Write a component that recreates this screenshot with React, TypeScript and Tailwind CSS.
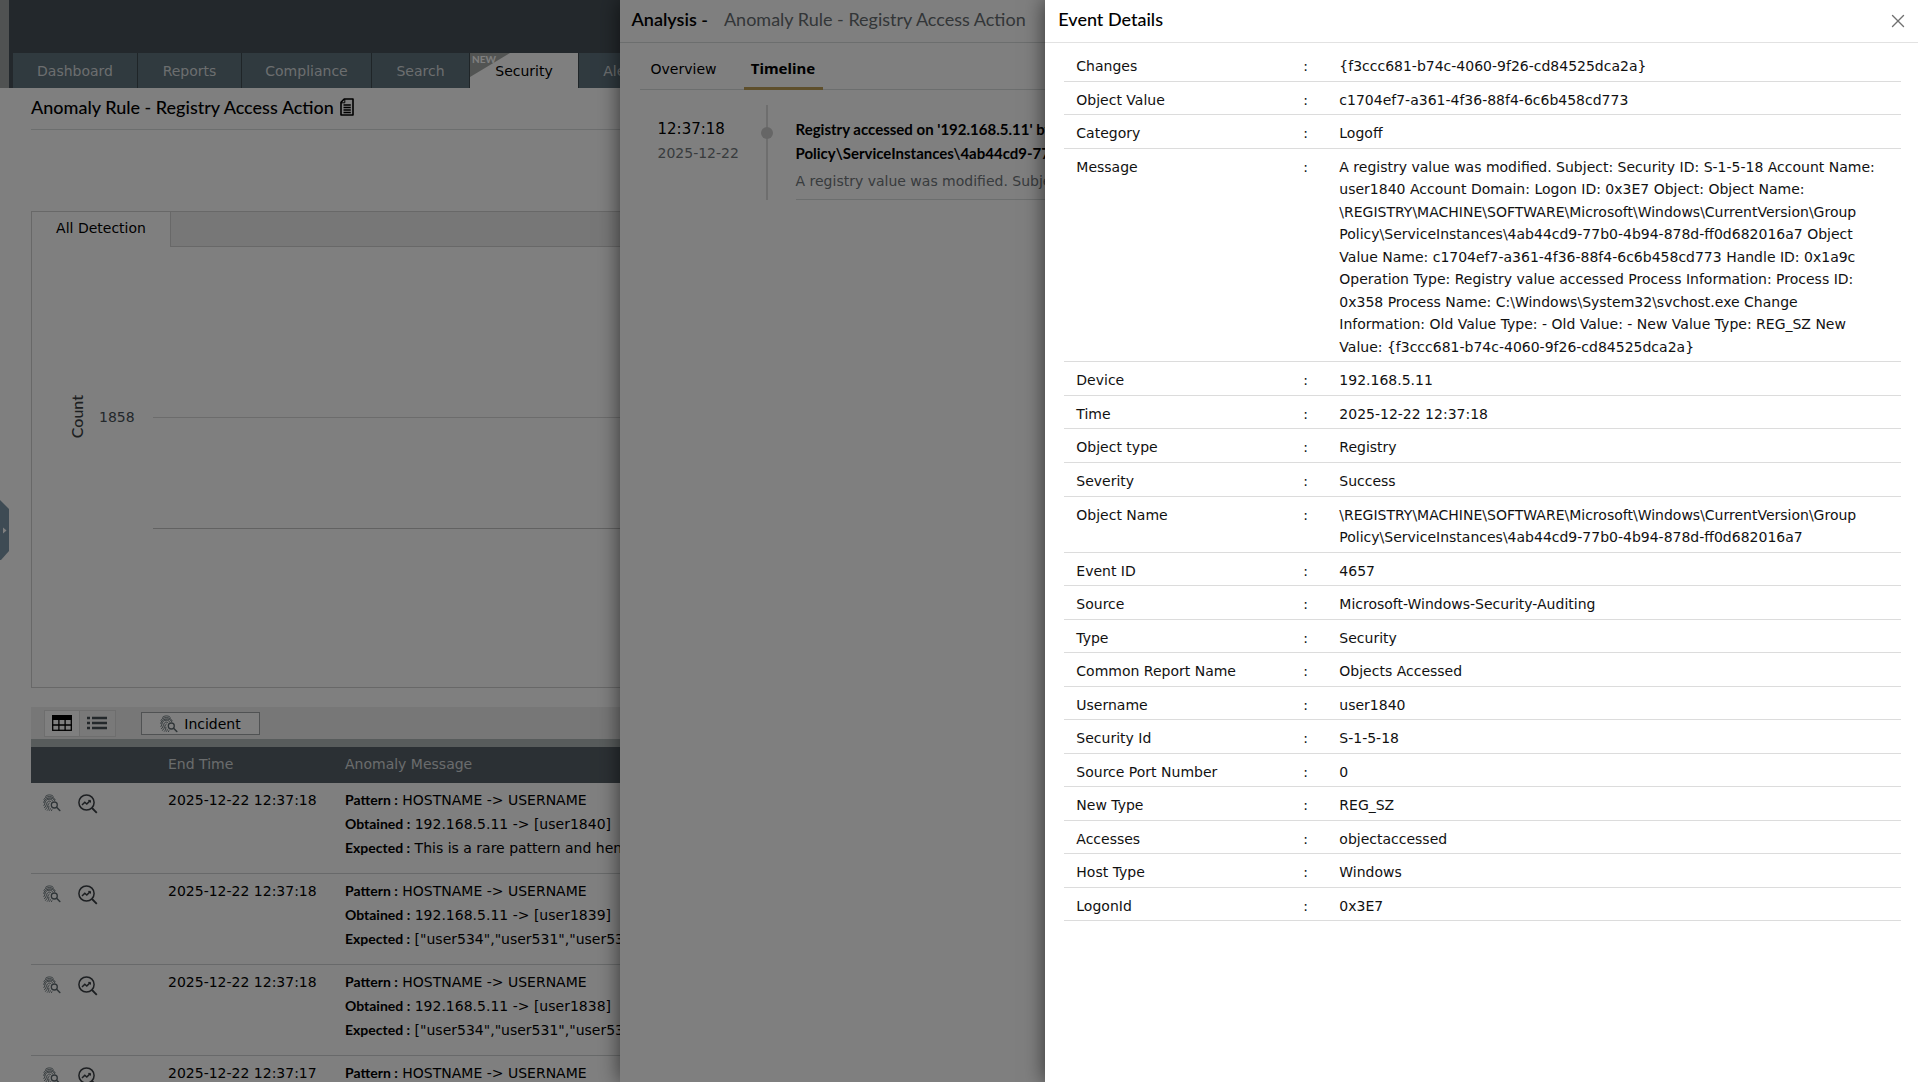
import React from 'react';
import { X } from 'lucide-react';

const tabs = [
  { label: 'Dashboard', width: 'w-[125px]' },
  { label: 'Reports', width: 'w-[104px]' },
  { label: 'Compliance', width: 'w-[130px]' },
  { label: 'Search', width: 'w-[98px]' },
  { label: 'Security', width: 'w-[109px]', active: true },
  { label: 'Alerts', width: 'w-[90px]' },
];

const anomalies = [
  { time: '2025-12-22 12:37:18', obtained: '[user1840]', expected: 'This is a rare pattern and hence' },
  { time: '2025-12-22 12:37:18', obtained: '[user1839]', expected: '["user534","user531","user532"]' },
  { time: '2025-12-22 12:37:18', obtained: '[user1838]', expected: '["user534","user531","user532"]' },
  { time: '2025-12-22 12:37:17', obtained: '[user1837]', expected: '["user534","user531","user532"]' },
];

const eventDetails = [
  ['Changes', '{f3ccc681-b74c-4060-9f26-cd84525dca2a}'],
  ['Object Value', 'c1704ef7-a361-4f36-88f4-6c6b458cd773'],
  ['Category', 'Logoff'],
  [
    'Message',
    'A registry value was modified. Subject: Security ID: S-1-5-18 Account Name: user1840 Account Domain: Logon ID: 0x3E7 Object: Object Name: \\REGISTRY\\MACHINE\\SOFTWARE\\Microsoft\\Windows\\CurrentVersion\\Group Policy\\ServiceInstances\\4ab44cd9-77b0-4b94-878d-ff0d682016a7 Object Value Name: c1704ef7-a361-4f36-88f4-6c6b458cd773 Handle ID: 0x1a9c Operation Type: Registry value accessed Process Information: Process ID: 0x358 Process Name: C:\\Windows\\System32\\svchost.exe Change Information: Old Value Type: - Old Value: - New Value Type: REG_SZ New Value: {f3ccc681-b74c-4060-9f26-cd84525dca2a}',
  ],
  ['Device', '192.168.5.11'],
  ['Time', '2025-12-22 12:37:18'],
  ['Object type', 'Registry'],
  ['Severity', 'Success'],
  [
    'Object Name',
    '\\REGISTRY\\MACHINE\\SOFTWARE\\Microsoft\\Windows\\CurrentVersion\\Group Policy\\ServiceInstances\\4ab44cd9-77b0-4b94-878d-ff0d682016a7',
  ],
  ['Event ID', '4657'],
  ['Source', 'Microsoft-Windows-Security-Auditing'],
  ['Type', 'Security'],
  ['Common Report Name', 'Objects Accessed'],
  ['Username', 'user1840'],
  ['Security Id', 'S-1-5-18'],
  ['Source Port Number', '0'],
  ['New Type', 'REG_SZ'],
  ['Accesses', 'objectaccessed'],
  ['Host Type', 'Windows'],
  ['LogonId', '0x3E7'],
];

const FingerprintSearchIcon = () => (
  <svg width="18" height="18" viewBox="0 0 18 18" fill="none" stroke="#5f6b70" strokeWidth="0.9" strokeLinecap="round">
    <path d="M2.600 2.200C4.500 0.400 8.500 0.400 10.200 2.200" />
    <path d="M0.900 5.400C2.200 1.600 10.600 1.400 12.200 5.800" />
    <path d="M0.800 8.600C0.600 3.200 10.600 2.400 11.600 6.600" />
    <path d="M0.900 11.600C2.600 9.600 1.400 5.400 6.200 5.200C8.200 5.200 9.200 6 9.600 6.800" />
    <path d="M1.400 13.800C4.200 11.600 3 7.200 6.400 7.100C7.200 7.100 7.600 7.400 7.900 7.800" />
    <path d="M2.600 15.400C5.200 13.200 4.400 9.400 6.300 9M4.400 16.300C5.800 15 5.800 13.600 5.900 12.200M6.400 16.500C7 15.900 7.200 15.300 7.300 14.600M8.500 16.600L8.900 15.700" />
    <circle cx="11.300" cy="11" r="3" strokeWidth="1.300" />
    <path d="M13.600 13.300L16.800 16.500" strokeWidth="1.600" />
  </svg>
);

const AnalyzeIcon = () => (
  <svg width="20" height="20" viewBox="0 0 20 20" fill="none" stroke="#3a3f44" strokeWidth="1.500">
    <circle cx="8.500" cy="8.500" r="7.600" />
    <path d="M14 14L18.800 18.800" strokeWidth="1.800" />
    <path d="M4 11L6.800 8.200L8.800 10L12.200 6.600" strokeWidth="1.500" />
    <path d="M10.200 6.400H12.500V8.600" strokeWidth="1" />
  </svg>
);

const GridIcon = () => (
  <svg width="20" height="16" viewBox="0 0 20 16" fill="none" stroke="#000" strokeWidth="1.300">
    <rect x="0.700" y="0.700" width="18.600" height="14.600" />
    <path d="M0 2.500H20" strokeWidth="5" />
    <path d="M0 10H20M6.900 4V16M13.100 4V16" />
  </svg>
);

const ListIcon = () => (
  <svg width="20" height="14" viewBox="0 0 20 14" fill="none" stroke="#475056" strokeWidth="2.400">
    <path d="M0 2H3M5 2H20M0 7H3M5 7H20M0 12H3M5 12H20" />
  </svg>
);

const ReportIcon = () => (
  <svg width="14" height="18" viewBox="0 0 14 18" fill="none" stroke="#000" strokeWidth="1.600">
    <path d="M4.200 1H13V17H1V4.200Z" strokeLinejoin="round" />
    <path d="M1 4.800H4.800V1" strokeWidth="1" />
    <path d="M3.500 7H10.800M3.500 9.500H10.800M3.500 12H10.800M3.500 14.500H10.800" strokeWidth="1.300" />
  </svg>
);

const MainPage = () => (
  <main className="relative">
    <header className="flex h-[88px] items-end bg-[#475158]">
      <div className="h-full w-[9px] bg-[#a0a5a5]"></div>
      <nav className="ml-1 flex">
        {tabs.map((tab) => (
          <a
            key={tab.label}
            href="#"
            className={`relative flex h-[35px] items-center justify-center border-r border-[#3f4a51] ${tab.width} ${
              tab.active ? 'bg-white text-black' : 'bg-[#60747f] text-[#d8dcde]'
            }`}
          >
            {tab.active && (
              <span className="absolute top-0 left-0 h-6 w-10 overflow-hidden">
                <svg width="40" height="24" viewBox="0 0 40 24" className="absolute top-0 left-0">
                  <path d="M0 0H40L0 24Z" fill="#a4a9a6" />
                </svg>
                <span className="absolute top-0 left-[2px] font-['Lato'] text-[10px] leading-[12px] font-bold text-white">NEW</span>
              </span>
            )}
            {tab.label}
          </a>
        ))}
      </nav>
    </header>

    <div className="pl-[31px]">
      <div className="flex h-[42px] items-center gap-[6px] border-b border-[#d9dcdd] pb-[3px]">
        <h1 className="font-['Lato'] text-lg leading-6 font-medium text-black">Anomaly Rule - Registry Access Action</h1>
        <ReportIcon />
      </div>

      <section className="mt-[81px] flex h-[477px] flex-col border border-[#d0d0d0]">
        <div className="flex h-[35px] shrink-0">
          <button className="w-[139px] border-r border-[#d0d0d0] pb-[3px] text-black">All Detection</button>
          <div className="grow border-b border-[#d0d0d0] bg-[#eeeeee]"></div>
        </div>
        <div className="flex items-start pt-[148px]">
          <div className="ml-[33px] rotate-180 font-['Lato'] text-base leading-6 font-medium text-[#3a3f42] [writing-mode:vertical-rl]">Count</div>
          <div className="ml-[10px] w-9 pt-[10px] leading-6 text-[#475056]">1858</div>
          <div className="ml-[18px] grow pt-[22px]">
            <div className="h-[111px] border-t border-[#d8d8d8]"></div>
            <div className="border-t border-[#c4c4c4]"></div>
          </div>
        </div>
      </section>

      <div className="mt-[19px] flex h-8 items-center bg-[#eeeeee] pl-[13px]">
        <div className="flex border border-[#dcdcdc]">
          <button aria-label="Table view" className="flex h-[25px] w-[35px] items-center justify-center border-r border-[#dcdcdc] bg-white">
            <GridIcon />
          </button>
          <button aria-label="List view" className="flex h-[25px] w-[35px] items-center justify-center bg-[#f2f2f2] pr-[2px]">
            <ListIcon />
          </button>
        </div>
        <button className="ml-[25px] flex h-[23px] w-[119px] items-center justify-center gap-[6px] border border-[#a0a5a7] bg-white pt-[2px] text-black">
          <FingerprintSearchIcon />
          Incident
        </button>
      </div>
      <div className="h-2 bg-[#b0b8b8]"></div>

      <table className="w-full table-fixed border-separate border-spacing-0 text-left">
        <colgroup>
          <col className="w-[137px]" />
          <col className="w-[177px]" />
          <col />
        </colgroup>
        <thead>
          <tr className="h-9 bg-[#576168] text-[#d4d8da]">
            <th></th>
            <th className="pb-[3px] font-normal">End Time</th>
            <th className="pb-[3px] font-normal">Anomaly Message</th>
          </tr>
        </thead>
        <tbody>
          {anomalies.map((row) => (
            <tr key={row.obtained} className="align-top text-black">
              <td className="border-b border-[#d0d3d4] pt-[11px] pl-3">
                <div className="flex items-start gap-[17px]">
                  <FingerprintSearchIcon />
                  <AnalyzeIcon />
                </div>
              </td>
              <td className="border-b border-[#d0d3d4] pt-[5px] leading-6">{row.time}</td>
              <td className="h-[91px] border-b border-[#d0d3d4] pt-[5px] leading-6 whitespace-nowrap">
                <div><b className="font-['Lato'] font-bold">Pattern :</b> HOSTNAME -&gt; USERNAME</div>
                <div><b className="font-['Lato'] font-bold">Obtained :</b> 192.168.5.11 -&gt; {row.obtained}</div>
                <div><b className="font-['Lato'] font-bold">Expected :</b> {row.expected}</div>
              </td>
            </tr>
          ))}
        </tbody>
      </table>
    </div>

    {/* Side menu handle */}
    <button aria-label="Open side menu" className="absolute top-[500px] left-0">
      <svg width="9" height="60" viewBox="0 0 9 60">
        <path d="M0 0L9 9V51L1 60H0Z" fill="#7c96a8" />
        <path d="M3 27.500L6.500 30.500L3 33.500Z" fill="#fff" />
      </svg>
    </button>
  </main>
);

const AnalysisDrawer = () => (
  <aside className="absolute inset-y-0 right-0 w-[67.7%] bg-white shadow-[0_0_20px_rgba(0,0,0,0.6)]">
    <div className="flex h-[43px] items-center gap-4 border-b border-[#d9dcdd] px-3 pb-1 font-['Lato'] text-lg leading-6">
      <h2 className="font-semibold text-black">Analysis -</h2>
      <span className="text-[#666c70]">Anomaly Rule - Registry Access Action</span>
    </div>
    <nav className="mt-[10px] ml-5 flex h-[37px] border-b border-[#d9dcdd] text-black">
      <button className="w-[104px] pr-4 pb-1 text-center">Overview</button>
      <button className="-mb-px w-[79px] border-b-3 border-[#bd9f58] pb-[2px] text-center font-['Noto_Sans'] text-[15px] font-bold">Timeline</button>
    </nav>
    <div className="mt-[15px] flex">
      <div className="w-[146px] pt-3 pl-[38px] leading-6">
        <div className="text-[15px] text-black">12:37:18</div>
        <div className="text-[#70767a]">2025-12-22</div>
      </div>
      <div className="relative w-[2px] bg-[#dcdcdc]">
        <span className="absolute top-[22px] -left-[5px] size-3 rounded-full bg-[#cccccc]"></span>
      </div>
      <div className="ml-7 grow border-b border-[#d9dcdd] pt-3 pb-[6px] leading-6 whitespace-nowrap">
        <p className="font-['Lato'] text-[15px] font-bold text-black">
          Registry accessed on '192.168.5.11' by
          <br />
          Policy\ServiceInstances\4ab44cd9-77b0
        </p>
        <p className="mt-1 text-[#70767a]">A registry value was modified. Subject:</p>
      </div>
    </div>
  </aside>
);

const EventDetailsDrawer = () => (
  <aside className="absolute inset-y-0 right-0 w-[45.5%] bg-white text-[#111111] shadow-[0_0_20px_rgba(0,0,0,0.6)]">
    <div className="flex h-[43px] items-center justify-between border-b border-[#e2e2e2] pr-[9px] pl-[13px]">
      <h2 className="pb-1 font-['Lato'] text-lg leading-6 font-medium text-black">Event Details</h2>
      <button aria-label="Close" className="text-[#707070]">
        <X className="size-[22px]" strokeWidth={1.5} />
      </button>
    </div>
    <div className="pt-[5px] pr-[17px] pl-[19px]">
      <table className="w-full table-fixed text-left leading-[1.61]">
        <colgroup>
          <col className="w-[239px]" />
          <col className="w-9" />
          <col />
        </colgroup>
        <tbody>
          {eventDetails.map(([label, value]) => (
            <tr key={label} className="border-b border-[#dcdcdc] align-top">
              <th scope="row" className="pt-[7px] pb-[3px] pl-3 font-normal">{label}</th>
              <td className="pt-[7px] pb-[3px]">:</td>
              <td className="pt-[7px] pr-6 pb-[3px]">{value}</td>
            </tr>
          ))}
        </tbody>
      </table>
    </div>
  </aside>
);

const App = () => {
  return (
    <div className="relative h-screen overflow-hidden bg-white font-['DejaVu_Sans',sans-serif] text-sm">
      <MainPage />
      <AnalysisDrawer />
      <div className="absolute inset-0 bg-black/50"></div>
      <EventDetailsDrawer />
    </div>
  );
};

export default App;
